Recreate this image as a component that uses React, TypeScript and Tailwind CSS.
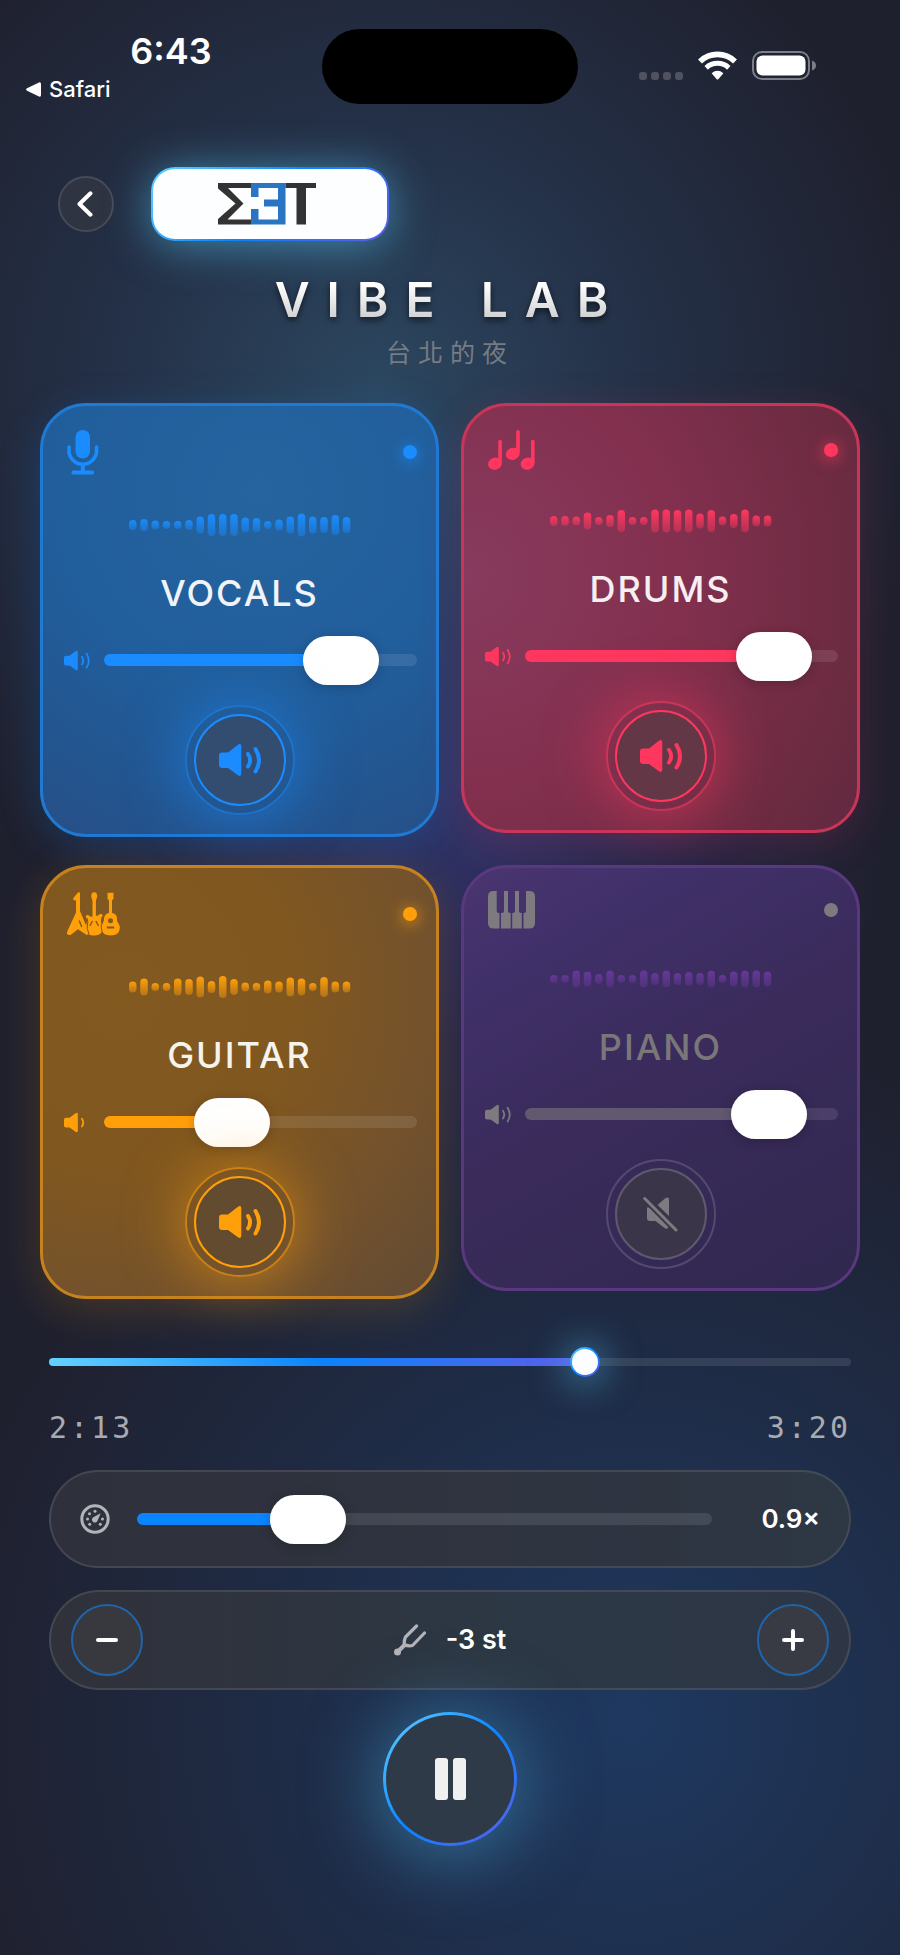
import { useState } from 'react';
import type { ReactNode } from 'react';

type Stem = {
  id: string;
  name: string;
  icon: ReactNode;
  volume: number;
  muted: boolean;
  levels: number[];
  cardClass: string;
  headClass: string;
  accentClass: string;
  waveClass: string;
  labelClass: string;
  fillClass: string;
  buttonClass: string;
  discClass: string;
};

const MicIcon = () => (
  <svg width="32" height="45" viewBox="0 0 32 45" fill="none" aria-hidden="true">
    <rect x="8.5" y="0" width="14.5" height="28.5" rx="7.2" fill="currentColor" />
    <path d="M2 17v3.5a13.8 13.8 0 0 0 27.6 0V17" stroke="currentColor" strokeWidth="3.6" strokeLinecap="round" />
    <path d="M15.8 34v8" stroke="currentColor" strokeWidth="4" />
    <path d="M6.5 42.5h18.6" stroke="currentColor" strokeWidth="4" strokeLinecap="round" />
  </svg>
);

const NotesIcon = () => (
  <svg width="48" height="41" viewBox="0 0 48 41" fill="currentColor" aria-hidden="true">
    <ellipse cx="7" cy="33.6" rx="7" ry="6" transform="rotate(-20 7 33.6)" />
    <path d="M10.3 11.5q0-1.7 1.8-1.7t1.8 1.7V33l-3.6-4z" />
    <ellipse cx="24.8" cy="23.8" rx="7" ry="6" transform="rotate(-20 24.8 23.8)" />
    <path d="M28.2 1.7Q28.2 0 30 0t1.8 1.7V23l-3.6-4z" />
    <ellipse cx="39.6" cy="33.6" rx="7" ry="6" transform="rotate(-20 39.6 33.6)" />
    <path d="M43 11.5q0-1.7 1.8-1.7t1.8 1.7V33L43 29z" />
  </svg>
);

const GuitarsIcon = () => (
  <svg width="53" height="44" viewBox="0 0 53 44" fill="currentColor" aria-hidden="true">
    <path d="M12.4 0 13 1.5V19l8.6 20.5q.8 3-2 3.6L11 37.2 3.6 43Q-.8 43.6.1 39.8L9 20.5V8.5L6.3 8l.2-2.3L11 .6z" />
    <path d="M24.2 4.5q0-4.3 3-4.3t3 4.3L28.9 9v14.6q1.2.6 2.4-.4 2-2 3.8-.9 1.2 1.2-.6 4-1.6 3 .6 6 2.4 11-7.6 11.3-10.4 0-8.2-11.2 1.9-3.2.5-5.6-1.8-2.6-.2-3.6 1.6-.7 3.3 1 1.2.8 2.6.2V9z" />
    <path
      fillRule="evenodd"
      d="M40.5.8h6v6L45 8.5v12.3q5.2 1.5 5 6-.2 2.4 1.2 4.2 1.8 2.4 1.6 5.6-.8 7-9.2 7t-9.3-7q-.3-3.2 1.5-5.6 1.4-1.8 1.2-4.2 0-4.5 5-6V8.5L40.5 6.8zM43.5 26.3a2.5 2.5 0 1 0 0 5 2.5 2.5 0 0 0 0-5zM39.8 34.5v2h7.4v-2z"
    />
    <path d="M12.2 28.5l2.6 6.5M22.8 34l2.7-5M31.6 34l-2.7-5" stroke="#82591f" strokeWidth="1.4" fill="none" />
    <path d="M20 26q1.5 4.500.4 7t1.600 9M34.800 25q1.500 3 .2 6t-.5 6q.5 3 1.500 5" stroke="#82591f" strokeWidth="1" fill="none" />
  </svg>
);

const PianoIcon = () => (
  <svg width="47" height="38" viewBox="0 0 47 38" fill="currentColor" aria-hidden="true">
    <path d="M5.5 0H8.7V20q0 2 2 2h.8V37.5h-6Q0 37.5 0 32V5.5Q0 0 5.5 0Z" />
    <path d="M16 0h4v20q0 2 2 2h.7v15.5H13V22h1q2 0 2-2z" />
    <path d="M27 0h4v20q0 2 2 2h.8v15.5h-9.6V22H25q2 0 2-2z" />
    <path d="M38 0h3.5Q47 0 47 5.5V32q0 5.5-5.5 5.5h-6V22h.5q2 0 2-2z" />
  </svg>
);

const SpeakerIcon = ({ waves = 2, small = false }: { waves?: number; small?: boolean }) => (
  <svg width={small ? 26 : 42} height={small ? 21 : 32} viewBox="0 0 42 32" fill="none" aria-hidden="true">
    <path
      d="M3 8.5H9L18.6 1Q22.3-1.4 22.3 2.5V29.5Q22.3 33.4 18.6 31L9 24H3Q0 24 0 21V11.5Q0 8.5 3 8.5Z"
      fill="currentColor"
    />
    <g stroke="currentColor" strokeWidth={small ? 2.8 : 4} strokeLinecap="round">
      <path d="M29 10Q33.2 16.2 29 22.5" />
      {waves > 1 && <path d="M36.5 5Q43.5 16.2 36.5 27.5" />}
    </g>
  </svg>
);

const MutedIcon = () => (
  <svg width="35" height="36" viewBox="0 0 35 36" fill="none" aria-hidden="true">
    <path d="M14.5 9 22.5 2Q26 .5 26 3.5V20z" fill="currentColor" />
    <path d="M6 11.5 25.5 31Q24.5 34 21.5 32L12.5 25H7q-3 0-3-3V11.5z" fill="currentColor" />
    <path d="M2 2 33 34" stroke="#3a3549" strokeWidth="6.5" />
    <path d="M1.7 2.5 33 34" stroke="currentColor" strokeWidth="3" strokeLinecap="round" />
  </svg>
);

const GaugeIcon = () => (
  <svg width="30" height="30" viewBox="0 0 30 30" fill="currentColor" aria-hidden="true">
    <circle cx="15" cy="15" r="13.2" fill="none" stroke="currentColor" strokeWidth="3" />
    <circle cx="7.5" cy="15" r="1.5" />
    <circle cx="9.5" cy="9.7" r="1.5" />
    <circle cx="15" cy="7.3" r="1.5" />
    <circle cx="22.5" cy="15" r="1.5" />
    <circle cx="9.7" cy="20.3" r="1.5" />
    <circle cx="20.3" cy="20.3" r="1.5" />
    <path d="M20.7 9.2 17.6 16.6A2.9 2.9 0 1 1 13.3 13.2z" />
  </svg>
);

const ForkIcon = () => (
  <svg width="32" height="32" viewBox="0 0 32 32" fill="none" aria-hidden="true">
    <circle cx="3.5" cy="28" r="3.5" fill="currentColor" />
    <path d="M3.5 28 11 20.5" stroke="currentColor" strokeWidth="4" />
    <path
      d="M22.5 2 11.5 13q-1.5 3-1.3 7.5Q14 22.500 18.500 21.500L30.500 9"
      stroke="currentColor"
      strokeWidth="3.2"
      strokeLinecap="round"
      strokeLinejoin="round"
    />
  </svg>
);

const BrandMark = () => (
  <svg width="98" height="42" viewBox="0 0 98 42" role="img" aria-label="EET">
    <path d="M0 0H33V5H10L25.5 20.5 9.5 36.5H33V41.5H0V36L17.5 20.5 0 5.5Z" fill="#333" />
    <path d="M33 0H67.5V41.5H33V26H40.5V36.5H60V23.5H46V16.5H60V5H40.5V14H33Z" fill="#2a74c4" />
    <path d="M67.5 0H98V5H88V41.5H78.5V5H67.5Z" fill="#333" />
  </svg>
);

const STEMS: Stem[] = [
  {
    id: 'vocals',
    name: 'VOCALS',
    icon: <MicIcon />,
    volume: 84,
    muted: false,
    levels: [10, 12, 9, 8, 8, 10, 17, 22, 22, 22, 15, 14, 8, 11, 17, 23, 17, 16, 20, 16],
    cardClass:
      'border-[#1f7ad4] bg-[radial-gradient(circle_at_55%_20%,#25649f_0%,#215e9c_50%,#23558f_80%,#2c4a80_115%)] shadow-[0_10px_44px_rgba(26,140,255,0.2)]',
    headClass: 'h-[54px]',
    accentClass: 'text-[#1a8cff]',
    waveClass: 'text-[#1a8cff]',
    labelClass: 'text-[#f1f3f7]',
    fillClass: 'text-[#1a8cff]',
    buttonClass: 'border-[#1a8cff]/50 shadow-[0_2px_60px_rgba(26,140,255,0.6)]',
    discClass: 'border-current bg-[#324d70]',
  },
  {
    id: 'drums',
    name: 'DRUMS',
    icon: <NotesIcon />,
    volume: 89,
    muted: false,
    levels: [10, 10, 9, 17, 8, 12, 22, 8, 8, 23, 23, 22, 23, 15, 22, 9, 14, 23, 11, 11],
    cardClass:
      'border-[#c93559] bg-[radial-gradient(circle_at_0%_40%,#883b5e_0%,#83304f_45%,#6b2b40_85%,#562741_115%)] shadow-[0_10px_44px_rgba(255,55,95,0.16)]',
    headClass: 'h-[50px]',
    accentClass: 'text-[#ff375f]',
    waveClass: 'text-[#ff375f]',
    labelClass: 'text-[#f6eff2]',
    fillClass: 'text-[#ff375f]',
    buttonClass: 'border-[#ff375f]/60 shadow-[0_2px_60px_rgba(255,55,95,0.6)]',
    discClass: 'border-current bg-[#643747]',
  },
  {
    id: 'guitar',
    name: 'GUITAR',
    icon: <GuitarsIcon />,
    volume: 38,
    muted: false,
    levels: [11, 17, 8, 8, 17, 16, 21, 12, 22, 16, 9, 8, 13, 11, 19, 17, 8, 20, 11, 11],
    cardClass:
      'border-[#c5821f] bg-[radial-gradient(circle_at_20%_30%,#82591f_0%,#80571f_40%,#74522c_70%,#5b4837_110%)] shadow-[0_10px_44px_rgba(255,159,10,0.18)]',
    headClass: 'h-[54px]',
    accentClass: 'text-[#ff9f0a]',
    waveClass: 'text-[#ff9f0a]',
    labelClass: 'text-[#f6f2ec]',
    fillClass: 'text-[#ff9f0a]',
    buttonClass: 'border-[#ff9f0a]/60 shadow-[0_2px_60px_rgba(255,159,10,0.6)]',
    discClass: 'border-current bg-[#624b2f]',
  },
  {
    id: 'piano',
    name: 'PIANO',
    icon: <PianoIcon />,
    volume: 87,
    muted: true,
    levels: [8, 8, 17, 15, 10, 17, 8, 8, 17, 12, 17, 12, 14, 12, 17, 8, 15, 17, 17, 15],
    cardClass: 'border-[#59387f] bg-[linear-gradient(150deg,#4a3570_0%,#403069_20%,#3a2b5b_50%,#30284f_100%)]',
    headClass: 'h-[46px]',
    accentClass: 'text-[#7d7b7f]',
    waveClass: 'text-[#67389a]',
    labelClass: 'text-[#7a777a]',
    fillClass: 'text-[#62586f]',
    buttonClass: 'border-[#544a70]',
    discClass: 'border-[#5f586f] bg-[#3a3549]',
  },
];

const SLIDER =
  'h-3 min-w-0 flex-1 cursor-pointer appearance-none rounded-full bg-white/10 outline-none [&::-webkit-slider-thumb]:h-[49px] [&::-webkit-slider-thumb]:w-[76px] [&::-webkit-slider-thumb]:appearance-none [&::-webkit-slider-thumb]:rounded-full [&::-webkit-slider-thumb]:bg-white [&::-webkit-slider-thumb]:shadow-[0_2px_12px_rgba(0,0,0,0.2)]';

const fillTo = (percent: number) => ({
  backgroundImage: `linear-gradient(to right, currentColor ${percent}%, transparent ${percent}%)`,
});

const Waveform = ({ id, levels }: { id: string; levels: number[] }) => (
  <svg width="222" height="24" viewBox="0 0 222 24" aria-hidden="true">
    <defs>
      <linearGradient id={`wave-${id}`} x1="0" y1="0" x2="0" y2="1">
        <stop offset="0" stopColor="currentColor" />
        <stop offset="1" stopColor="currentColor" stopOpacity="0.4" />
      </linearGradient>
    </defs>
    {levels.map((level, i) => (
      <rect key={i} x={i * 11.25} y={12 - level / 2} width="7.5" height={level} rx="3.75" fill={`url(#wave-${id})`} />
    ))}
  </svg>
);

const StemCard = ({ stem }: { stem: Stem }) => {
  const [volume, setVolume] = useState(stem.volume);
  const [muted, setMuted] = useState(stem.muted);

  return (
    <section className={`flex flex-col gap-4 rounded-[46px] border-3 p-[19px] ${stem.cardClass}`}>
      <div className={`flex items-center justify-between pl-[5px] ${stem.headClass} ${stem.accentClass}`}>
        {stem.icon}
        <span className={`h-3.5 w-3.5 rounded-full bg-current ${muted ? '' : 'shadow-[0_2px_16px_currentColor]'}`} />
      </div>
      <div className={`flex h-[60px] items-center justify-center ${stem.waveClass}`}>
        <Waveform id={stem.id} levels={stem.levels} />
      </div>
      <h2 className={`text-center text-4xl leading-[44px] font-medium tracking-[2px] ${stem.labelClass}`}>{stem.name}</h2>
      <div className="flex h-[58px] items-center gap-3">
        <span className={`flex w-[30px] justify-center ${stem.accentClass}`}>
          <SpeakerIcon small waves={volume > 50 ? 2 : 1} />
        </span>
        <input
          type="range"
          min={0}
          max={100}
          value={volume}
          onChange={e => setVolume(Number(e.target.value))}
          aria-label={`${stem.name} volume`}
          className={`${SLIDER} ${stem.fillClass}`}
          style={fillTo(volume)}
        />
      </div>
      <div className="flex justify-center">
        <button
          type="button"
          onClick={() => setMuted(!muted)}
          aria-label={`Mute ${stem.name}`}
          aria-pressed={muted}
          className={`flex h-[110px] w-[110px] items-center justify-center rounded-full border-2 ${stem.buttonClass} ${stem.accentClass}`}
        >
          <span className={`flex h-[92px] w-[92px] items-center justify-center rounded-full border-2 ${stem.discClass}`}>
            {muted ? <MutedIcon /> : <SpeakerIcon />}
          </span>
        </button>
      </div>
    </section>
  );
};

const StatusBar = () => (
  <div className="grid grid-cols-[1fr_256px_1fr] items-start pt-[29px] text-white">
    <div>
      <div className="pl-5 text-center text-4xl leading-[44px] font-semibold">6:43</div>
      <a href="#safari" className="flex items-center gap-2 pl-[26px] text-[22px] leading-8 font-medium">
        <svg width="15" height="15" viewBox="0 0 15 15" fill="currentColor" aria-hidden="true">
          <path d="M1 6.3 13 .4Q15-.2 15 2v11q0 2.2-2 1.6L1 8.7Q-.8 7.5 1 6.3Z" />
        </svg>
        Safari
      </a>
    </div>
    <div className="h-[75px] rounded-full bg-black" />
    <div className="flex items-end pt-[22px] pl-[61px]">
      <div className="mr-[15px] flex gap-1">
        <span className="h-2 w-2 rounded-[3px] bg-[#50525f]" />
        <span className="h-2 w-2 rounded-[3px] bg-[#50525f]" />
        <span className="h-2 w-2 rounded-[3px] bg-[#50525f]" />
        <span className="h-2 w-2 rounded-[3px] bg-[#50525f]" />
      </div>
      <svg width="39" height="29" viewBox="0 0 39 29" fill="none" className="mr-[15px]" aria-hidden="true">
        <path d="M2 10.400A25.200 25.200 0 0 1 37 10.400" stroke="#fff" strokeWidth="5.6" />
        <path d="M8.200 16.800A16.600 16.600 0 0 1 30.800 16.800" stroke="#fff" strokeWidth="5" />
        <path d="M13.600 22.200Q19.500 17.400 25.400 22.200L20.500 28Q19.500 29 18.500 28Z" fill="#fff" />
      </svg>
      <svg width="64" height="29" viewBox="0 0 64 29" fill="none" aria-hidden="true">
        <rect x="1" y="1" width="56" height="27" rx="9" stroke="#7c7e88" strokeWidth="2" />
        <rect x="4.5" y="4.5" width="49" height="20" rx="6" fill="#fff" />
        <path d="M60 9.500q4 1.500 4 5t-4 5z" fill="#7c7e88" />
      </svg>
    </div>
  </div>
);

export default function App() {
  const [position, setPosition] = useState(67.5);
  const [speed, setSpeed] = useState(0.9);
  const [pitch, setPitch] = useState(-3);

  return (
    <div className="min-h-screen bg-[#1f202e] bg-[radial-gradient(circle_at_42%_20%,rgba(62,125,165,0.42)_0%,rgba(52,100,150,0.24)_270px,transparent_560px),radial-gradient(circle_at_52%_43%,rgba(75,70,190,0.35)_0%,transparent_420px),radial-gradient(circle_at_70%_88%,rgba(30,85,155,0.46)_0%,rgba(30,80,145,0.25)_340px,transparent_700px)] pb-[108px] font-['Inter','Noto_Sans_CJK_TC',sans-serif]">
      <StatusBar />

      <header className="mt-[62px]">
        <div className="flex items-center gap-[37px] pl-[58px]">
          <button
            type="button"
            aria-label="Back"
            className="flex h-14 w-14 items-center justify-center rounded-full border-2 border-[#474b58] bg-[#2e3441]"
          >
            <svg width="19" height="26" viewBox="0 0 19 26" fill="none" aria-hidden="true">
              <path d="M13.5 2.3 2.5 13l11 10.7" stroke="#fff" strokeWidth="4" strokeLinecap="round" strokeLinejoin="round" />
            </svg>
          </button>
          <div className="rounded-[24px] bg-[linear-gradient(135deg,#64d2ff,#0a84ff_50%,#5e5ce6)] p-0.5 shadow-[0_4px_44px_rgba(80,190,235,0.6)]">
            <div className="flex h-[70px] w-[234px] items-center justify-center rounded-[22px] bg-[#fdfeff] pr-1.5">
              <BrandMark />
            </div>
          </div>
        </div>
        <h1 className="mt-[29px] text-center text-5xl leading-[60px] font-semibold tracking-[17px] drop-shadow-[0_3px_3px_rgba(0,0,0,0.6)]">
          <span className="bg-[linear-gradient(to_bottom,#fff_25%,#d2d2d4_80%)] bg-clip-text text-transparent">VIBE LAB</span>
        </h1>
        <p className="mt-[7px] text-center text-[25px] leading-8 tracking-[7px] text-[#777b82]">台北的夜</p>
      </header>

      <main>
        <div className="mt-[34px] grid grid-cols-2 items-start gap-x-[22px] gap-y-7 px-10">
          {STEMS.map(stem => (
            <StemCard key={stem.id} stem={stem} />
          ))}
        </div>

        <div className="mt-[59px] flex flex-col px-[49px]">
          <input
            type="range"
            min={0}
            max={100}
            step={0.5}
            value={position}
            onChange={e => setPosition(Number(e.target.value))}
            aria-label="Playback position"
            className="h-2 w-full cursor-pointer appearance-none rounded-full bg-white/10 outline-none [&::-webkit-slider-thumb]:h-[30px] [&::-webkit-slider-thumb]:w-[30px] [&::-webkit-slider-thumb]:appearance-none [&::-webkit-slider-thumb]:rounded-full [&::-webkit-slider-thumb]:border-2 [&::-webkit-slider-thumb]:border-transparent [&::-webkit-slider-thumb]:[background:linear-gradient(#fcfdff,#fcfdff)_padding-box,linear-gradient(135deg,#64d2ff,#0a84ff_50%,#5e5ce6)_border-box] [&::-webkit-slider-thumb]:shadow-[0_2px_36px_4px_rgba(80,190,235,0.6)]"
            style={{
              backgroundImage: 'linear-gradient(to right, #64d2ff, #0a84ff 50%, #5e5ce6)',
              backgroundSize: `${position}% 100%`,
              backgroundRepeat: 'no-repeat',
            }}
          />
          <div className="mt-[42px] flex justify-between font-['DejaVu_Sans_Mono',monospace] text-[30px] leading-10 tracking-[3px] text-[#a9abb2]">
            <time>2:13</time>
            <time>3:20</time>
          </div>

          <div className="mt-[22px] flex h-[98px] items-center rounded-full border-2 border-white/10 bg-[linear-gradient(90deg,#2f303b,#2e3744)] px-[29px]">
            <span className="text-[#b3b4b9]">
              <GaugeIcon />
            </span>
            <div className="flex flex-1 px-[27px]">
              <input
                type="range"
                min={0.5}
                max={2}
                step={0.05}
                value={speed}
                onChange={e => setSpeed(Number(e.target.value))}
                aria-label="Speed"
                className={`${SLIDER} text-[#0a84ff]`}
                style={fillTo(((speed - 0.5) / 1.5) * 100)}
              />
            </div>
            <output className="w-[81px] text-right text-[26px] leading-8 font-semibold text-white">{speed}×</output>
          </div>

          <div className="mt-[22px] flex h-[100px] items-center justify-between rounded-full border-2 border-white/10 bg-[linear-gradient(90deg,#30313a,#2c3845_60%,#2e3646)] px-5">
            <button
              type="button"
              onClick={() => setPitch(pitch - 1)}
              aria-label="Lower pitch"
              className="flex h-[72px] w-[72px] items-center justify-center rounded-full border-2 border-[#2064ab] bg-[#38393f]"
            >
              <svg width="24" height="24" viewBox="0 0 24 24" stroke="#fff" strokeWidth="4" strokeLinecap="round" aria-hidden="true">
                <path d="M3 12h18" />
              </svg>
            </button>
            <div className="flex items-center gap-5 text-[#b3b4b9]">
              <ForkIcon />
              <output className="text-[27px] leading-8 font-semibold text-white">{pitch} st</output>
            </div>
            <button
              type="button"
              onClick={() => setPitch(pitch + 1)}
              aria-label="Raise pitch"
              className="flex h-[72px] w-[72px] items-center justify-center rounded-full border-2 border-[#2064ab] bg-[#383a44]"
            >
              <svg width="24" height="24" viewBox="0 0 24 24" stroke="#fff" strokeWidth="4" strokeLinecap="round" aria-hidden="true">
                <path d="M3 12h18M12 3v18" />
              </svg>
            </button>
          </div>

          <button
            type="button"
            aria-label="Pause"
            className="mt-[22px] flex h-[134px] w-[134px] items-center justify-center gap-[5px] self-center rounded-full border-3 border-transparent shadow-[0_6px_72px_6px_rgba(70,170,220,0.5)] [background:linear-gradient(#2f3a49,#2f3a49)_padding-box,linear-gradient(135deg,#64d2ff,#0a84ff_50%,#5e5ce6)_border-box]"
          >
            <span className="h-[42px] w-[13px] rounded-[3px] bg-[#f0f0f1]" />
            <span className="h-[42px] w-[13px] rounded-[3px] bg-[#f0f0f1]" />
          </button>
        </div>
      </main>
    </div>
  );
}
